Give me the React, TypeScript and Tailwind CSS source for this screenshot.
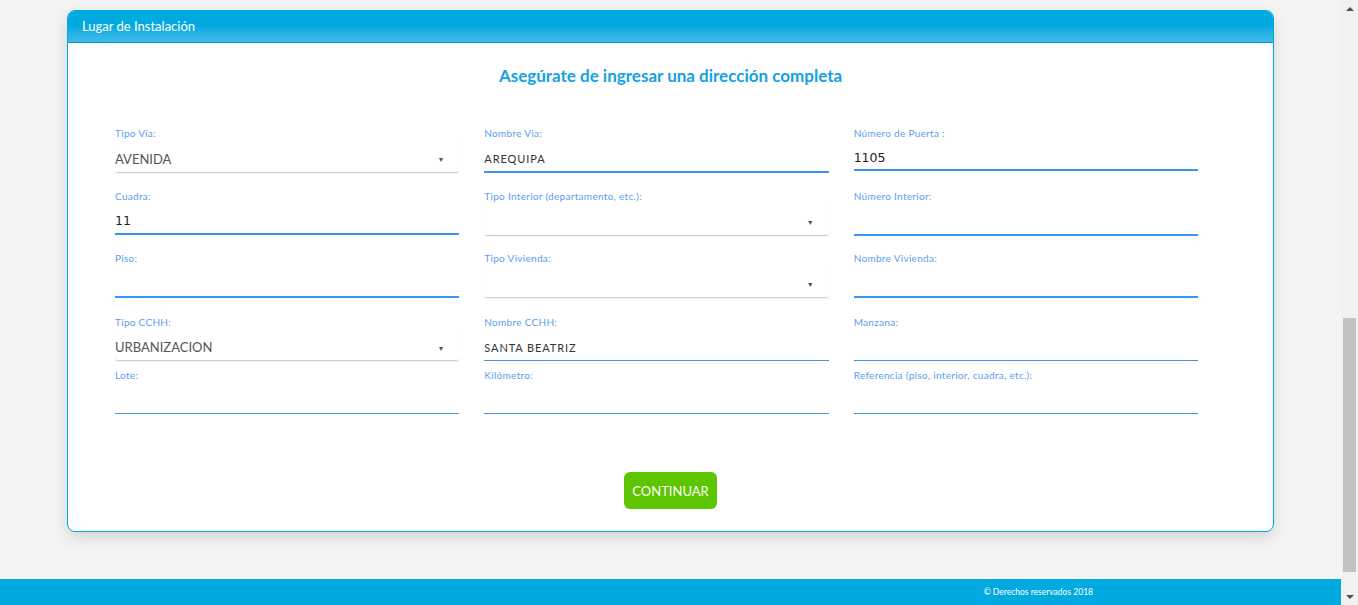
import React from "react";

type FieldProps = {
  label: string;
  value?: string;
  kind: "select" | "input";
  line?: "thick" | "thin";
  valueStyle?: "caps" | "sans" | "num";
  h?: string;
};

const Field = ({ label, value, kind, line = "thick", valueStyle = "caps", h = "h-[32px]" }: FieldProps) => {
  const lineCls =
    kind === "select"
      ? "border-b border-[#cfcfcf] rounded-b-[3px] shadow-[0_1px_1px_rgba(0,0,0,0.06)]"
      : line === "thick"
      ? "border-b-2 border-[#3796f2]"
      : "border-b border-[#3796f2]";
  const valueCls =
    valueStyle === "sans"
      ? "font-['Lato'] text-[13px] text-[#555]"
      : valueStyle === "num"
      ? "font-['DejaVu_Sans'] text-[12.5px] text-[#222]"
      : "font-['Lato'] text-[11px] tracking-[0.9px] text-[#333]";

  return (
    <div className="flex flex-col">
      <div className="h-4 flex items-center font-['Lato'] text-[10px] tracking-[0.3px] text-[#5d9cf2]">{label}</div>
      <div className={`${h} flex items-center pt-[6px] ${lineCls}`}>
        <span className={`flex-1 ${valueCls}`}>{value}</span>
        {kind === "select" && <span className="mr-[15px] text-[7px] text-[#555]">▼</span>}
      </div>
    </div>
  );
};

export default function App() {
  return (
    <div className="flex h-[605px] w-full overflow-hidden bg-[#f4f4f4] font-['Lato',sans-serif]">
      <div className="flex flex-1 flex-col">
        <div className="flex-1 pt-[10px]">
          {/* Card */}
          <div className="mx-auto w-[1207px] h-[522px] rounded-[8px] border border-[#00a9e0] bg-white shadow-[0_6px_16px_rgba(0,0,0,0.13)] overflow-hidden flex flex-col">
            <div className="h-[32px] shrink-0 bg-gradient-to-b from-[#00a9e0] via-[#00a9e0] to-[#3dbbe6] border-b border-[#00a0dc] flex items-center pl-[14px] text-[13px] text-white">
              Lugar de Instalación
            </div>

            <div className="flex flex-1 flex-col">
              <h2 className="mt-[21px] h-6 flex items-center justify-center text-[17px] font-bold text-[#14a2e0]">
                Asegúrate de ingresar una dirección completa
              </h2>

              <div className="mt-[37px] pl-[47px] pr-[75px] flex flex-col">
                <div className="grid grid-cols-3 gap-x-[25px]">
                  <Field label="Tipo Vía:" value="AVENIDA" kind="select" valueStyle="sans" />
                  <Field label="Nombre Via:" value="AREQUIPA" kind="input" />
                  <Field label="Número de Puerta :" value="1105" kind="input" valueStyle="num" h="h-[30px]" />
                </div>
                <div className="mt-[15px] grid grid-cols-3 gap-x-[25px]">
                  <Field label="Cuadra:" value="11" kind="input" valueStyle="num" h="h-[31px]" />
                  <Field label="Tipo Interior (departamento, etc.):" kind="select" />
                  <Field label="Número Interior:" kind="input" />
                </div>
                <div className="mt-[14px] grid grid-cols-3 gap-x-[25px]">
                  <Field label="Piso:" kind="input" />
                  <Field label="Tipo Vivienda:" kind="select" />
                  <Field label="Nombre Vivienda:" kind="input" />
                </div>
                <div className="mt-[16px] grid grid-cols-3 gap-x-[25px]">
                  <Field label="Tipo CCHH:" value="URBANIZACION" kind="select" valueStyle="sans" h="h-[31px]" />
                  <Field label="Nombre CCHH:" value="SANTA BEATRIZ" kind="input" line="thin" h="h-[31px]" />
                  <Field label="Manzana:" kind="input" line="thin" h="h-[31px]" />
                </div>
                <div className="mt-[6px] grid grid-cols-3 gap-x-[25px]">
                  <Field label="Lote:" kind="input" line="thin" h="h-[31px]" />
                  <Field label="Kilómetro:" kind="input" line="thin" h="h-[31px]" />
                  <Field label="Referencia (piso, interior, cuadra, etc.):" kind="input" line="thin" h="h-[31px]" />
                </div>
              </div>

              <div className="mt-[58px] flex justify-center">
                <button className="h-[37px] w-[93px] rounded-[6px] bg-[#5cc500] pt-[2px] text-[13px] text-white">
                  CONTINUAR
                </button>
              </div>
            </div>
          </div>
        </div>

        {/* Footer */}
        <div className="h-[26px] shrink-0 bg-[#00aae0] flex items-center justify-end pr-[248px] text-[8.5px] text-white">
          © Derechos reservados 2018
        </div>
      </div>

      {/* Scrollbar */}
      <div className="w-[17px] shrink-0 bg-[#f1f1f1] flex flex-col items-center">
        <div className="h-[17px] flex items-center justify-center">
          <div className="w-0 h-0 border-x-[4px] border-x-transparent border-b-[4px] border-b-[#505050]" />
        </div>
        <div className="flex-1 w-full flex flex-col px-[2px] pt-[301px] pb-[16px]">
          <div className="flex-1 bg-[#c1c1c1]" />
        </div>
        <div className="h-[17px] flex items-center justify-center">
          <div className="w-0 h-0 border-x-[4px] border-x-transparent border-t-[4px] border-t-[#505050]" />
        </div>
      </div>
    </div>
  );
}
